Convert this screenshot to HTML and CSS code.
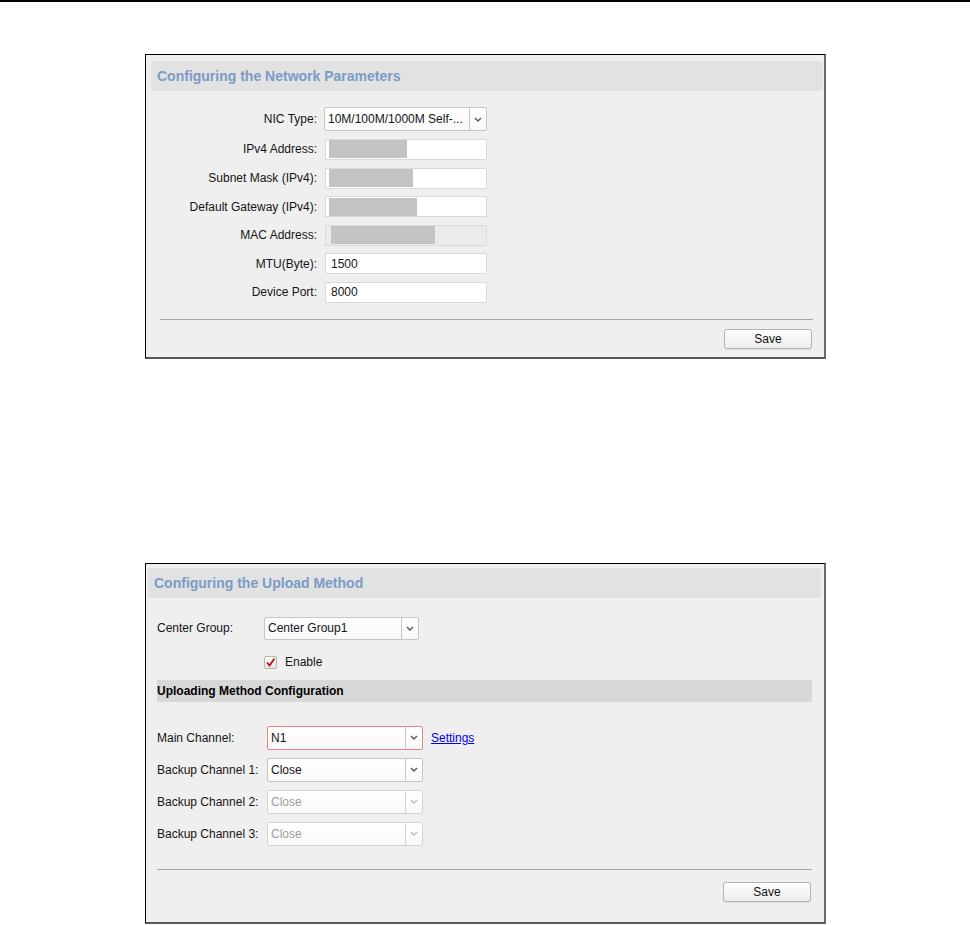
FILE: index.html
```html
<!DOCTYPE html>
<html lang="en">
<head>
    <meta charset="UTF-8">
    <title>Device Configuration</title>
    <link rel="stylesheet" href="styles.css">
</head>
<body>
    <div class="topline"></div>

    <div class="panel panel-net">
        <div class="panel-head head-net">Configuring the Network Parameters</div>
        <div class="net-form">
            <label class="net-label">NIC Type:</label>
            <div class="select select-nic">
                <span class="select-text">10M/100M/1000M Self-...</span>
                <span class="select-arrow"><svg width="8" height="5" viewBox="0 0 8 5"><path d="M1 1l3 3 3-3" fill="none" stroke="#555" stroke-width="1.4"/></svg></span>
            </div>

            <label class="net-label">IPv4 Address:</label>
            <div class="field"><span class="mask mask-ip"></span></div>

            <label class="net-label">Subnet Mask (IPv4):</label>
            <div class="field"><span class="mask mask-sub"></span></div>

            <label class="net-label">Default Gateway (IPv4):</label>
            <div class="field"><span class="mask mask-gw"></span></div>

            <label class="net-label">MAC Address:</label>
            <div class="field field-disabled"><span class="mask mask-mac"></span></div>

            <label class="net-label">MTU(Byte):</label>
            <div class="field field-text">1500</div>

            <label class="net-label">Device Port:</label>
            <div class="field field-text">8000</div>
        </div>
        <div class="panel-foot foot-net">
            <button class="btn-save">Save</button>
        </div>
    </div>

    <div class="panel panel-upload">
        <div class="panel-head head-upload">Configuring the Upload Method</div>
        <div class="upload-body">
            <div class="row row-group">
                <span class="group-label">Center Group:</span>
                <div class="select select-group">
                    <span class="select-text">Center Group1</span>
                    <span class="select-arrow"><svg width="8" height="5" viewBox="0 0 8 5"><path d="M1 1l3 3 3-3" fill="none" stroke="#555" stroke-width="1.4"/></svg></span>
                </div>
            </div>
            <div class="row row-enable">
                <span class="checkbox"><svg width="11" height="11" viewBox="0 0 11 11"><path d="M2 5.5l2.6 3L9.5 1.5" fill="none" stroke="#c8101a" stroke-width="1.9"/></svg></span>
                <span>Enable</span>
            </div>
            <div class="section-bar">Uploading Method Configuration</div>

            <div class="channels">
                <div class="row channel-row">
                    <span class="chan-label">Main Channel:</span>
                    <div class="select select-chan select-error">
                        <span class="select-text">N1</span>
                        <span class="select-arrow"><svg width="8" height="5" viewBox="0 0 8 5"><path d="M1 1l3 3 3-3" fill="none" stroke="#555" stroke-width="1.4"/></svg></span>
                    </div>
                    <a href="#" class="settings-link">Settings</a>
                </div>
                <div class="row channel-row">
                    <span class="chan-label">Backup Channel 1:</span>
                    <div class="select select-chan">
                        <span class="select-text">Close</span>
                        <span class="select-arrow"><svg width="8" height="5" viewBox="0 0 8 5"><path d="M1 1l3 3 3-3" fill="none" stroke="#555" stroke-width="1.4"/></svg></span>
                    </div>
                </div>
                <div class="row channel-row">
                    <span class="chan-label">Backup Channel 2:</span>
                    <div class="select select-chan select-disabled">
                        <span class="select-text">Close</span>
                        <span class="select-arrow"><svg width="8" height="5" viewBox="0 0 8 5"><path d="M1 1l3 3 3-3" fill="none" stroke="#bbb" stroke-width="1.4"/></svg></span>
                    </div>
                </div>
                <div class="row channel-row">
                    <span class="chan-label">Backup Channel 3:</span>
                    <div class="select select-chan select-disabled">
                        <span class="select-text">Close</span>
                        <span class="select-arrow"><svg width="8" height="5" viewBox="0 0 8 5"><path d="M1 1l3 3 3-3" fill="none" stroke="#bbb" stroke-width="1.4"/></svg></span>
                    </div>
                </div>
            </div>
        </div>
        <div class="panel-foot foot-upload">
            <button class="btn-save">Save</button>
        </div>
    </div>
</body>
</html>
```

FILE: styles.css
```css
body {
    margin: 0;
    padding: 0;
    background: #fff;
    color: #151515;
    font-family: "Liberation Sans", Arial, sans-serif;
    font-size: 12px;
}
.topline {
    height: 2px;
    background: #000;
}

/* panels */
.panel {
    width: 678px;
    margin-left: 145px;
    background: #efefef;
    border-top: 1px solid #000;
    border-left: 1px solid #000;
    border-right: 2px solid #6b6b6b;
    border-bottom: 2px solid #585858;
}
.panel-net {
    margin-top: 52px;
}
.panel-upload {
    margin-top: 204px;
}
.panel-head {
    height: 30px;
    line-height: 30px;
    padding-left: 6px;
    background: #e2e2e2;
    border-radius: 3px;
    color: #7b9bc7;
    font-size: 14px;
    font-weight: bold;
}
.head-net {
    margin: 6px 1px 0 5px;
}
.head-upload {
    margin: 4px 3px 0 2px;
}

/* network form */
.net-form {
    display: grid;
    grid-template-columns: 171px 162px;
    column-gap: 8px;
    row-gap: 7.6px;
    margin-top: 16px;
    align-items: center;
}
.net-label {
    text-align: right;
    white-space: nowrap;
}
.net-form .select-nic {
    margin-bottom: 0.4px;
}
.field {
    height: 21px;
    box-sizing: border-box;
    border: 1px solid #dadada;
    background: #fff;
    display: flex;
    align-items: center;
    padding-left: 3px;
}
.field-text {
    padding-left: 5px;
}
.field-disabled {
    background: #ebebeb;
    padding-left: 5px;
}
.mask {
    height: 18px;
    background: #c3c3c3;
}
.mask-ip { width: 78px; }
.mask-sub { width: 84px; }
.mask-gw { width: 88px; }
.mask-mac { width: 104px; }

/* selects */
.select {
    display: flex;
    box-sizing: border-box;
    border: 1px solid #c6c6c6;
    border-radius: 2px;
    background: linear-gradient(#ffffff, #f8f8f8);
}
.select-text {
    flex: 1;
    display: flex;
    align-items: center;
    padding-left: 3px;
    white-space: nowrap;
    overflow: hidden;
}
.select-arrow {
    width: 16px;
    border-left: 1px solid #c6c6c6;
    display: flex;
    align-items: center;
    justify-content: center;
}
.select-nic {
    width: 163px;
    height: 24px;
    margin-left: -1px;
}
.select-group {
    width: 155px;
    height: 23px;
}
.select-chan {
    width: 156px;
    height: 24px;
}
.select-error {
    border-color: #e08484;
}
.select-disabled {
    border-color: #d4d4d4;
    color: #9c9c9c;
}
.select-disabled .select-arrow {
    border-left-color: #d4d4d4;
}

/* upload form */
.upload-body {
    padding: 0 12px 0 11px;
}
.row {
    display: flex;
    align-items: center;
}
.row-group {
    margin-top: 19px;
}
.group-label {
    width: 107px;
}
.row-enable {
    margin-top: 16px;
    padding-left: 107px;
    height: 13px;
}
.checkbox {
    width: 13px;
    height: 13px;
    box-sizing: border-box;
    border: 1px solid #b4b4b4;
    border-radius: 2px;
    background: linear-gradient(#ffffff, #e4e4e4);
    display: flex;
    align-items: center;
    justify-content: center;
    margin-right: 8px;
}
.section-bar {
    margin-top: 11px;
    height: 22px;
    line-height: 22px;
    background: #d7d7d7;
    font-weight: bold;
    color: #000;
}
.channels {
    display: flex;
    flex-direction: column;
    gap: 8px;
    margin-top: 24px;
}
.chan-label {
    width: 110px;
    white-space: nowrap;
}
.settings-link {
    margin-left: 8px;
    color: #0000ee;
    text-decoration: underline;
}

/* footer */
.panel-foot {
    display: flex;
    justify-content: flex-end;
    border-top: 1px solid #a6a6a6;
}
.foot-net {
    margin: 16px 11px 0 14px;
    padding: 9px 1px 8px 0;
}
.foot-upload {
    margin: 23px 12px 0 11px;
    padding: 12px 1px 20px 0;
}
.btn-save {
    width: 88px;
    height: 20px;
    padding: 0;
    border: 1px solid #b3b3b3;
    border-radius: 3px;
    background: linear-gradient(#ffffff, #ececec);
    box-shadow: 0 1px 1px rgba(0, 0, 0, 0.08);
    font-family: "Liberation Sans", Arial, sans-serif;
    font-size: 12px;
    color: #111;
}
```
